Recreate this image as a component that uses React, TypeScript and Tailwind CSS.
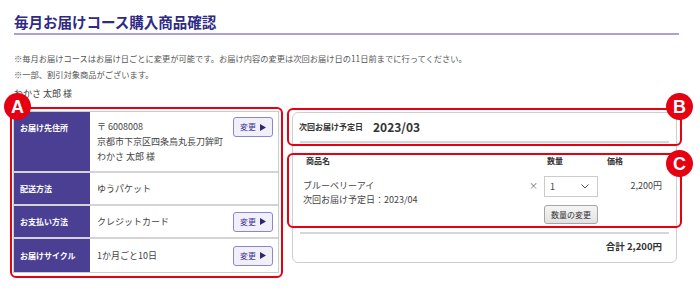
import React from 'react';

const ChangeButton: React.FC = () => (
    <button
        type="button"
        className="flex h-[20px] w-[40px] shrink-0 items-center justify-center gap-[4px] rounded-[3px] border border-[#8d87c9] bg-[#f0effa] text-[8px] leading-none text-[#3b348f]"
    >
        変更
        <svg width="6" height="7" viewBox="0 0 6 7">
            <polygon points="0,0 6,3.5 0,7" fill="#2e2874" />
        </svg>
    </button>
);

const Badge: React.FC<{ label: string; className: string }> = ({ label, className }) => (
    <div
        className={`absolute z-10 flex h-[27px] w-[27px] items-center justify-center rounded-full bg-[#e50012] font-['Liberation_Sans',Arial,sans-serif] text-[18px] font-bold leading-none text-white ${className}`}
    >
        {label}
    </div>
);

const App: React.FC = () => {
    return (
        <div className="h-[293px] w-[700px] overflow-hidden bg-white px-[14px] pt-[13px] font-['Noto_Sans_CJK_JP','Noto_Sans',sans-serif] text-[#444]">
            <h1 className="w-[665px] border-b-2 border-[#a8a1dd] pb-[2px] text-[14.5px] font-bold leading-[18px] text-[#2f2a84]">
                毎月お届けコース購入商品確認
            </h1>

            <div className="mt-[15px] text-[8.25px] leading-[16px] text-[#555]">
                <p>※毎月お届けコースはお届け日ごとに変更が可能です。お届け内容の変更は次回お届け日の11日前までに行ってください。</p>
                <p>※一部、割引対象商品がございます。</p>
            </div>
            <p className="mt-[4px] text-[9px] leading-[16px] text-[#444]">わかさ 太郎 様</p>

            <div className="mt-[5px] flex gap-[4px]">
                {/* A: customer settings */}
                <div className="relative -ml-[4px] w-[273px] rounded-[6px] border-2 border-[#e50012] pb-[3px] pl-[1px] pr-[2px] pt-[2px]">
                    <Badge label="A" className="-left-[8px] -top-[16px]" />
                    <div className="border border-[#cccccc] text-[9px]">
                        <div className="flex h-[61px] border-b-2 border-[#d4d4d4]">
                            <div className="w-[76px] bg-[#4b3f94] px-[6px] pt-[8px] text-[8px] font-bold leading-[15px] text-white">
                                お届け先住所
                            </div>
                            <div className="flex flex-1 items-start justify-between pl-[7px] pr-[5px] pt-[5px]">
                                <div className="pt-[2px] leading-[15px]">
                                    <p>〒 6008008</p>
                                    <p>京都市下京区四条烏丸長刀鉾町</p>
                                    <p>わかさ 太郎 様</p>
                                </div>
                                <ChangeButton />
                            </div>
                        </div>
                        <div className="flex h-[33px] border-b-2 border-[#d4d4d4]">
                            <div className="flex w-[76px] items-center bg-[#4b3f94] px-[6px] text-[8px] font-bold text-white">
                                配送方法
                            </div>
                            <div className="flex flex-1 items-center pl-[7px] pr-[5px]">ゆうパケット</div>
                        </div>
                        <div className="flex h-[33px] border-b-2 border-[#d4d4d4]">
                            <div className="flex w-[76px] items-center bg-[#4b3f94] px-[6px] text-[8px] font-bold text-white">
                                お支払い方法
                            </div>
                            <div className="flex flex-1 items-center justify-between pl-[7px] pr-[5px]">
                                クレジットカード
                                <ChangeButton />
                            </div>
                        </div>
                        <div className="flex h-[33px]">
                            <div className="flex w-[76px] items-center bg-[#4b3f94] px-[6px] text-[8px] font-bold text-white">
                                お届けサイクル
                            </div>
                            <div className="flex flex-1 items-center justify-between pl-[7px] pr-[5px]">
                                1か月ごと10日
                                <ChangeButton />
                            </div>
                        </div>
                    </div>
                </div>

                {/* order panel */}
                <div className="w-[395px] pt-[5px]">
                    <div className="mx-[5px] rounded-[6px] border border-[#cfcfcf] pb-[10px]">
                        {/* B: next delivery */}
                        <div className="relative -mx-[6px] -mt-[5px] rounded-[6px] border-2 border-[#e50012] pb-[1px]">
                            <Badge label="B" className="-right-[13px] -top-[17px]" />
                            <div className="flex h-[26px] items-end gap-[10px] pl-[10px]">
                                <span className="pb-[1px] text-[8px] font-bold leading-[16px] text-[#333]">次回お届け予定日</span>
                                <span className="text-[12px] font-bold leading-[18px] text-[#333]">2023/03</span>
                            </div>
                            <div className="mx-[11px] mt-[5px] h-[2px] bg-[#d6d6d6]" />
                        </div>

                        {/* C: items */}
                        <div className="relative -mx-[6px] mt-[7px] rounded-[6px] border-2 border-[#e50012] pb-[2px] pr-[18px]">
                            <Badge label="C" className="-right-[13px] -top-[5px]" />
                            <div className="flex text-[8px] font-bold leading-[12px] text-[#333]">
                                <span className="flex-1 pl-[17px]">商品名</span>
                                <span className="w-[15px]" />
                                <span className="w-[54px] pl-[3px]">数量</span>
                                <span className="w-[64px] pl-[9px]">価格</span>
                            </div>
                            <div className="mt-[9px] flex text-[9px]">
                                <div className="flex-1 pl-[14px] pt-[3px] leading-[14px]">
                                    <p>ブルーベリーアイ</p>
                                    <p>次回お届け予定日：2023/04</p>
                                </div>
                                <span className="w-[15px] pt-[3px] leading-[14px] text-[#666]">×</span>
                                <div className="flex w-[54px] flex-col gap-[8px]">
                                    <div className="flex h-[21px] items-center justify-between border border-[#cccccc] bg-white pl-[5px] pr-[8px]">
                                        <span>1</span>
                                        <svg width="8" height="5" viewBox="0 0 8 5">
                                            <polyline points="0.5,0.5 4,4 7.5,0.5" fill="none" stroke="#555" strokeWidth="1" />
                                        </svg>
                                    </div>
                                    <button
                                        type="button"
                                        className="h-[19px] rounded-[3px] border border-[#a5a5a5] bg-gradient-to-b from-[#f5f5f5] to-[#e2e2e2] text-[8px] leading-none text-[#333]"
                                    >
                                        数量の変更
                                    </button>
                                </div>
                                <span className="w-[64px] pt-[3px] text-right leading-[14px]">2,200円</span>
                            </div>
                        </div>

                        <div className="mx-[7px] mt-[4px] h-[2px] bg-[#d6d6d6]" />
                        <p className="mt-[6px] pr-[14px] text-right text-[9.5px] font-bold leading-[12px] text-[#333]">合計 2,200円</p>
                    </div>
                </div>
            </div>
        </div>
    );
};

export default App;
